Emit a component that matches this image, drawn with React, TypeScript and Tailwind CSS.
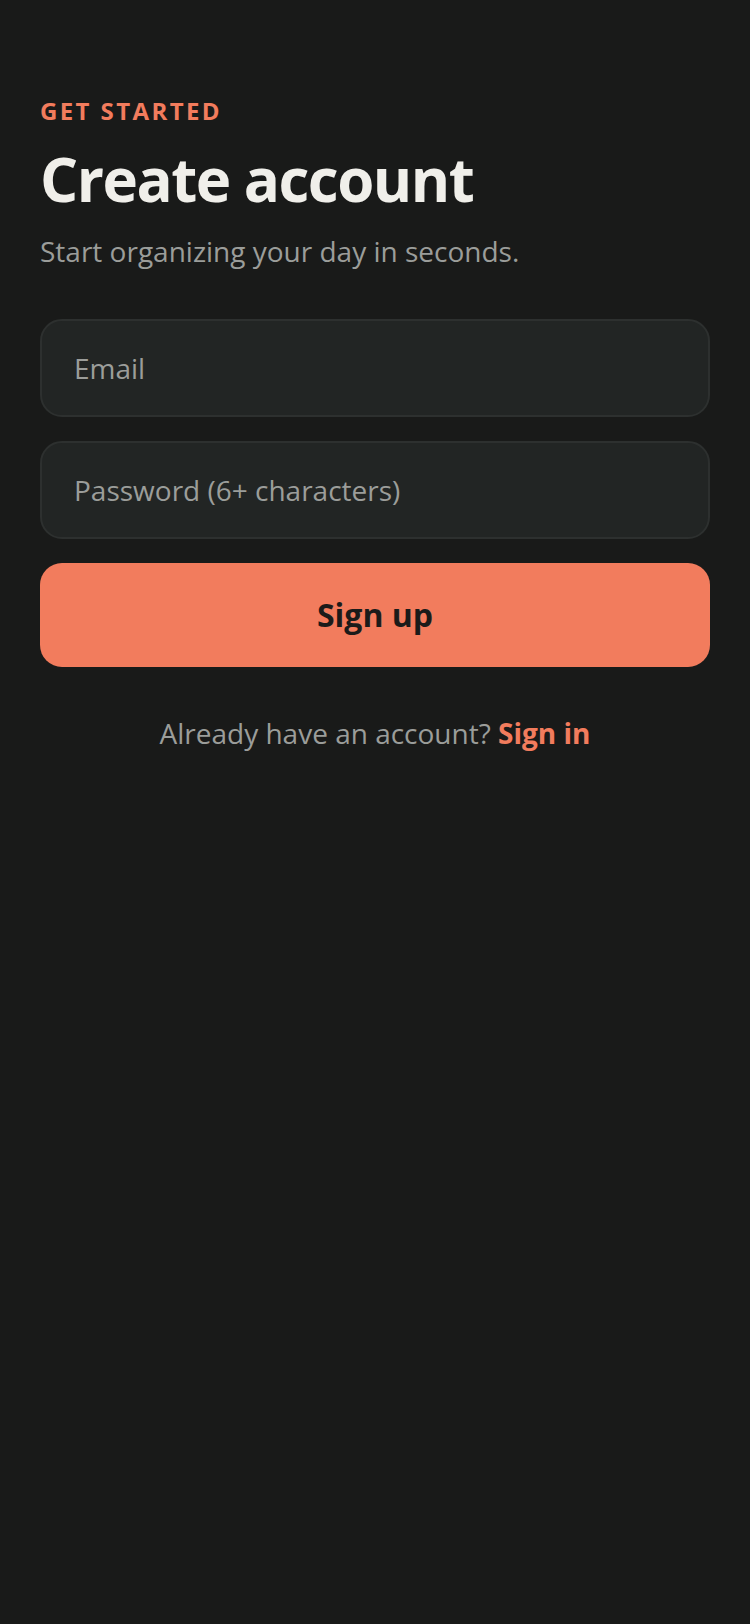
export default function App() {
  return (
    <div className="min-h-[1624px] w-full bg-[#191a19] font-['Open_Sans',sans-serif]">
      <div className="flex flex-col px-[40px] pt-[95px]">
        <p className="text-[24px] leading-[32px] font-bold tracking-[0.1em] text-[#f27c5d]">
          GET STARTED
        </p>
        <h1 className="mt-[16px] text-[60px] leading-[72px] font-bold tracking-[-0.025em] text-[#f0efea]">
          Create account
        </h1>
        <p className="mt-[18px] text-[28px] leading-[36px] text-[#9b9d9a]">
          Start organizing your day in seconds.
        </p>

        <div className="mt-[50px] flex flex-col gap-[24px]">
          <input
            type="email"
            placeholder="Email"
            className="h-[98px] w-full rounded-[22px] border-2 border-[#2d302f] bg-[#222524] px-[32px] text-[28px] text-[#f0efea] outline-none placeholder:text-[#9b9d9a]"
          />
          <input
            type="password"
            placeholder="Password (6+ characters)"
            className="h-[98px] w-full rounded-[22px] border-2 border-[#2d302f] bg-[#222524] px-[32px] text-[28px] text-[#f0efea] outline-none placeholder:text-[#9b9d9a]"
          />
          <button className="h-[104px] w-full rounded-[22px] bg-[#f27c5d] text-[32px] font-bold text-[#1b1b1a]">
            Sign up
          </button>
        </div>

        <p className="mt-[48px] text-center text-[28px] leading-[36px] text-[#9b9d9a]">
          Already have an account? <span className="font-bold text-[#f27c5d]">Sign in</span>
        </p>
      </div>
    </div>
  );
}
